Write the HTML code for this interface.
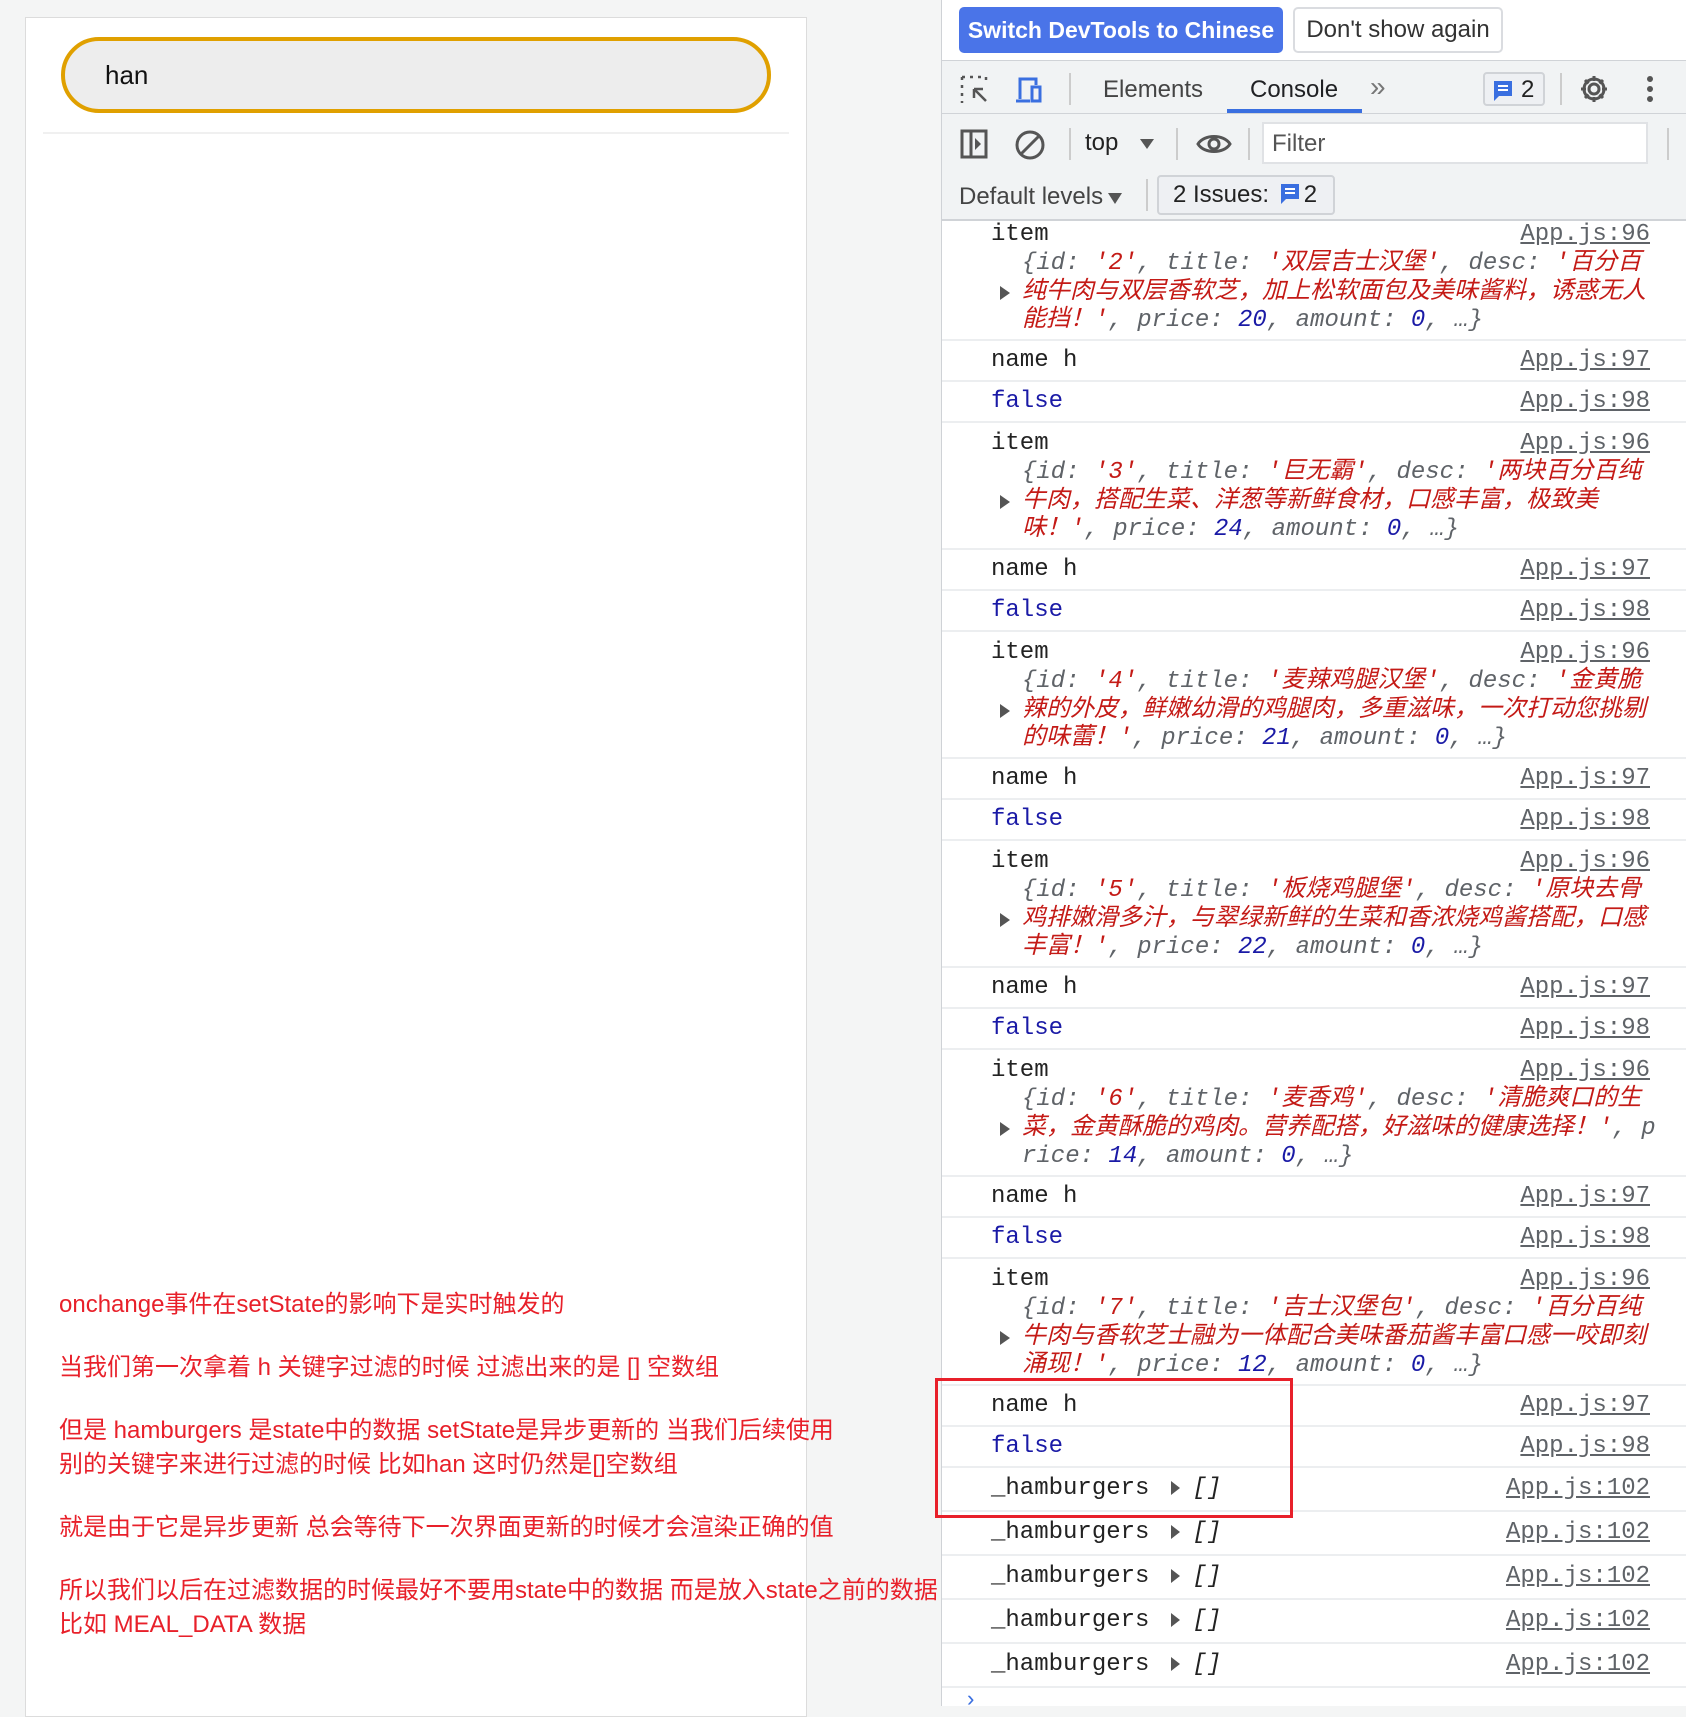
<!DOCTYPE html>
<html><head><meta charset="utf-8">
<style>
*{margin:0;padding:0;box-sizing:border-box}
body{width:1686px;height:1706px;overflow:hidden;background:#f4f5f5;position:relative;font-family:"Liberation Sans","Noto Sans CJK SC",sans-serif}
.panel{position:absolute;left:25px;top:17px;width:782px;height:1700px;background:#fff;border:1px solid #dcdcdc}
.inp{position:absolute;left:61px;top:37px;width:710px;height:76px;border:4px solid #e0a000;border-radius:38px;background:#ededed;font-size:26px;line-height:68px;padding-left:40px;color:#111}
.hr{position:absolute;left:43px;top:132px;width:746px;height:2px;background:#f0f0f0}
.note{position:absolute;left:59px;color:#e8202a;font-size:24px;line-height:34px;white-space:nowrap}
.dt{position:absolute;left:941px;top:0;width:745px;height:1706px;background:#fff;border-left:1px solid #cfd2d6;overflow:hidden}
.top{height:61px;background:#fff;border-bottom:1px solid #d0d3d7;position:relative}
.b1{position:absolute;left:17px;top:7px;width:324px;height:46px;background:#4a74e8;color:#fff;border-radius:5px;font-size:23px;line-height:46px;text-align:center;font-weight:bold}
.b2{position:absolute;left:351px;top:7px;width:210px;height:46px;border:2px solid #dadce0;border-radius:5px;font-size:24px;line-height:42px;text-align:center;color:#333}
.tabs{height:53px;background:#f1f3f4;border-bottom:1px solid #d0d3d7;position:relative;font-size:24px;color:#333}
.tb2{height:55px;background:#f1f3f4;position:relative;font-size:24px;color:#222}
.tb3{height:52px;background:#f1f3f4;border-bottom:2px solid #d0d3d7;position:relative;font-size:24px;color:#333}
.abs{position:absolute}
.con{font-family:"Liberation Mono","Noto Sans CJK SC",monospace;font-size:24px;color:#222;position:relative}
.row{position:relative;border-bottom:2px solid #eceef0;white-space:nowrap}
.r{height:41px;line-height:39px;padding-left:49px}
.h{height:44px;line-height:42px;padding-left:49px}
.it{height:127px;padding-top:7px;line-height:28.8px;padding-left:49px}
.link{position:absolute;right:36px;color:#5f6368;text-decoration:underline}
.obj{padding-left:31px;font-style:italic;color:#5f6368}
.s{color:#c41a16}.n{color:#1a1aa6}
.tri{position:absolute;left:58px;top:72px;width:0;height:0;border-left:10px solid #555;border-top:7px solid transparent;border-bottom:7px solid transparent}
.f{color:#1a1aa6}
.arr{display:inline-block;width:0;height:0;border-left:9px solid #555;border-top:7px solid transparent;border-bottom:7px solid transparent;margin:0 12px 0 22px;vertical-align:middle}
</style></head><body>
<div class="panel"></div>
<div class="inp">han</div>
<div class="hr"></div>
<div class="note" style="top:1288px">onchange事件在setState的影响下是实时触发的</div>
<div class="note" style="top:1351px">当我们第一次拿着 h 关键字过滤的时候 过滤出来的是 [] 空数组</div>
<div class="note" style="top:1414px">但是 hamburgers 是state中的数据 setState是异步更新的 当我们后续使用</div>
<div class="note" style="top:1448px">别的关键字来进行过滤的时候 比如han 这时仍然是[]空数组</div>
<div class="note" style="top:1511px">就是由于它是异步更新 总会等待下一次界面更新的时候才会渲染正确的值</div>
<div class="note" style="top:1574px">所以我们以后在过滤数据的时候最好不要用state中的数据 而是放入state之前的数据</div>
<div class="note" style="top:1608px">比如 MEAL_DATA 数据</div>

<div class="dt">
<div class="top"><div class="b1">Switch DevTools to Chinese</div><div class="b2">Don't show again</div></div>
<div class="tabs">
<svg class="abs" style="left:18px;top:14px" width="30" height="30" viewBox="0 0 30 30" fill="none" stroke="#555" stroke-width="2.5"><path d="M2 2h4M10 2h4M18 2h4M26 2v4M2 2v4M2 10v4M2 18v4M2 26v2" stroke-dasharray="3 3"/><path d="M14 14l12 12M14 14h9M14 14v9"/></svg>
<svg class="abs" style="left:72px;top:14px" width="32" height="30" viewBox="0 0 32 30" fill="none" stroke="#3a6fe0" stroke-width="3"><path d="M6 24V4h16v6M2 26h14"/><rect x="18" y="12" width="8" height="14"/></svg>
<div class="abs" style="left:127px;top:12px;width:2px;height:32px;background:#ccc"></div>
<div class="abs" style="left:161px;top:15px;color:#444">Elements</div>
<div class="abs" style="left:308px;top:15px;color:#202124">Console</div>
<div class="abs" style="left:285px;top:48px;width:135px;height:4px;background:#3a6fe0"></div>
<div class="abs" style="left:428px;top:10px;color:#777;font-size:28px">»</div>
<div class="abs" style="left:541px;top:11px;width:62px;height:34px;border:2px solid #d0d3d7;border-radius:4px;background:#eef0f3"><svg class="abs" style="left:8px;top:6px" width="20" height="22" viewBox="0 0 20 22"><path d="M1 1h18v15H6l-5 5z" fill="#3a6fe0"/><path d="M5 6h10M5 10h10" stroke="#fff" stroke-width="2"/></svg><span class="abs" style="left:36px;top:2px;color:#222">2</span></div>
<div class="abs" style="left:618px;top:12px;width:2px;height:32px;background:#ccc"></div>
<svg class="abs" style="left:636px;top:12px" width="32" height="32" viewBox="0 0 32 32" fill="none" stroke="#555" stroke-width="3"><circle cx="16" cy="16" r="5"/><path d="M16 3v5M16 24v5M3 16h5M24 16h5M7 7l3.5 3.5M21.5 21.5L25 25M7 25l3.5-3.5M21.5 10.5L25 7"/><circle cx="16" cy="16" r="10"/></svg>
<div class="abs" style="left:705px;top:15px;width:6px;height:6px;border-radius:3px;background:#555;box-shadow:0 10px 0 #555,0 20px 0 #555"></div>
</div>
<div class="tb2">
<svg class="abs" style="left:18px;top:15px" width="28" height="30" viewBox="0 0 28 30" fill="none" stroke="#555" stroke-width="3"><rect x="2" y="2" width="24" height="26"/><path d="M11 2v26"/><path d="M15 9l6 6-6 6z" fill="#555" stroke="none"/></svg>
<svg class="abs" style="left:72px;top:15px" width="32" height="32" viewBox="0 0 32 32" fill="none" stroke="#555" stroke-width="3"><circle cx="16" cy="16" r="13"/><path d="M7 25L25 7"/></svg>
<div class="abs" style="left:127px;top:14px;width:2px;height:32px;background:#ccc"></div>
<div class="abs" style="left:143px;top:15px">top</div>
<div class="abs" style="left:198px;top:25px;border-top:10px solid #555;border-left:7px solid transparent;border-right:7px solid transparent"></div>
<div class="abs" style="left:234px;top:14px;width:2px;height:32px;background:#ccc"></div>
<svg class="abs" style="left:254px;top:17px" width="36" height="26" viewBox="0 0 36 26" fill="none" stroke="#555" stroke-width="3"><path d="M2 13C8 3 28 3 34 13C28 23 8 23 2 13z"/><circle cx="18" cy="13" r="5"/></svg>
<div class="abs" style="left:306px;top:14px;width:2px;height:32px;background:#ccc"></div>
<div class="abs" style="left:320px;top:8px;width:386px;height:42px;background:#fff;border:2px solid #e0e2e5;padding-left:8px;line-height:40px;color:#555">Filter</div>
<div class="abs" style="left:725px;top:14px;width:2px;height:32px;background:#ccc"></div>
</div>
<div class="tb3">
<div class="abs" style="left:17px;top:14px;color:#444">Default levels</div>
<div class="abs" style="left:166px;top:24px;border-top:11px solid #555;border-left:7px solid transparent;border-right:7px solid transparent"></div>
<div class="abs" style="left:204px;top:10px;width:2px;height:32px;background:#ccc"></div>
<div class="abs" style="left:215px;top:6px;width:178px;height:40px;border:2px solid #d0d3d7;border-radius:4px;background:#eef0f3;padding-left:14px;line-height:36px;color:#222">2 Issues: <svg style="vertical-align:-3px;margin:0 4px" width="20" height="22" viewBox="0 0 20 22"><path d="M1 1h18v15H6l-5 5z" fill="#3a6fe0"/><path d="M5 6h10M5 10h10" stroke="#fff" stroke-width="2"/></svg>2</div>
</div>
<div class="con">
<div class="row it" style="height:120px;padding-top:0"><div class="tri" style="top:65px"></div>item<span class="link">App.js:96</span><div class="obj">{id: <span class="s">'2'</span>, title: <span class="s">'双层吉士汉堡'</span>, desc: <span class="s">'百分百<br>纯牛肉与双层香软芝，加上松软面包及美味酱料，诱惑无人<br>能挡！'</span>, price: <span class="n">20</span>, amount: <span class="n">0</span>, …}</div></div>
<div class="row r">name h<span class="link">App.js:97</span></div>
<div class="row r"><span class="f">false</span><span class="link">App.js:98</span></div>

<div class="row it"><div class="tri"></div>item<span class="link">App.js:96</span><div class="obj">{id: <span class="s">'3'</span>, title: <span class="s">'巨无霸'</span>, desc: <span class="s">'两块百分百纯<br>牛肉，搭配生菜、洋葱等新鲜食材，口感丰富，极致美<br>味！'</span>, price: <span class="n">24</span>, amount: <span class="n">0</span>, …}</div></div>
<div class="row r">name h<span class="link">App.js:97</span></div>
<div class="row r"><span class="f">false</span><span class="link">App.js:98</span></div>

<div class="row it"><div class="tri"></div>item<span class="link">App.js:96</span><div class="obj">{id: <span class="s">'4'</span>, title: <span class="s">'麦辣鸡腿汉堡'</span>, desc: <span class="s">'金黄脆<br>辣的外皮，鲜嫩幼滑的鸡腿肉，多重滋味，一次打动您挑剔<br>的味蕾！'</span>, price: <span class="n">21</span>, amount: <span class="n">0</span>, …}</div></div>
<div class="row r">name h<span class="link">App.js:97</span></div>
<div class="row r"><span class="f">false</span><span class="link">App.js:98</span></div>

<div class="row it"><div class="tri"></div>item<span class="link">App.js:96</span><div class="obj">{id: <span class="s">'5'</span>, title: <span class="s">'板烧鸡腿堡'</span>, desc: <span class="s">'原块去骨<br>鸡排嫩滑多汁，与翠绿新鲜的生菜和香浓烧鸡酱搭配，口感<br>丰富！'</span>, price: <span class="n">22</span>, amount: <span class="n">0</span>, …}</div></div>
<div class="row r">name h<span class="link">App.js:97</span></div>
<div class="row r"><span class="f">false</span><span class="link">App.js:98</span></div>

<div class="row it"><div class="tri"></div>item<span class="link">App.js:96</span><div class="obj">{id: <span class="s">'6'</span>, title: <span class="s">'麦香鸡'</span>, desc: <span class="s">'清脆爽口的生<br>菜，金黄酥脆的鸡肉。营养配搭，好滋味的健康选择！'</span>, p<br>rice: <span class="n">14</span>, amount: <span class="n">0</span>, …}</div></div>
<div class="row r">name h<span class="link">App.js:97</span></div>
<div class="row r"><span class="f">false</span><span class="link">App.js:98</span></div>

<div class="row it"><div class="tri"></div>item<span class="link">App.js:96</span><div class="obj">{id: <span class="s">'7'</span>, title: <span class="s">'吉士汉堡包'</span>, desc: <span class="s">'百分百纯<br>牛肉与香软芝士融为一体配合美味番茄酱丰富口感一咬即刻<br>涌现！'</span>, price: <span class="n">12</span>, amount: <span class="n">0</span>, …}</div></div>
<div class="row r">name h<span class="link">App.js:97</span></div>
<div class="row r"><span class="f">false</span><span class="link">App.js:98</span></div>
<div class="row h">_hamburgers<span class="arr"></span><i>[]</i><span class="link">App.js:102</span></div>
<div class="row h">_hamburgers<span class="arr"></span><i>[]</i><span class="link">App.js:102</span></div>
<div class="row h">_hamburgers<span class="arr"></span><i>[]</i><span class="link">App.js:102</span></div>
<div class="row h">_hamburgers<span class="arr"></span><i>[]</i><span class="link">App.js:102</span></div>
<div class="row h">_hamburgers<span class="arr"></span><i>[]</i><span class="link">App.js:102</span></div>
<div style="padding-left:22px;color:#3a6fe0;font-size:22px">›</div>
</div>
</div>
<div class="abs" style="left:935px;top:1378px;width:358px;height:140px;border:3px solid #e8202a"></div>
</body></html>
